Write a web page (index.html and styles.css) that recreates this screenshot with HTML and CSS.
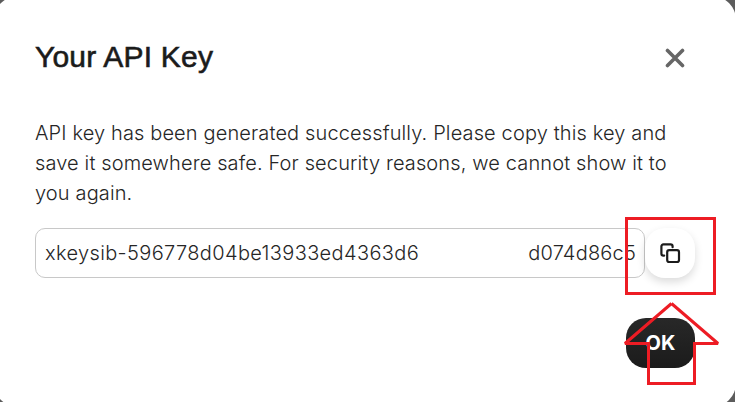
FILE: index.html
```html
<!DOCTYPE html>
<html lang="en">
	<head>
		<meta charset="UTF-8" />
		<meta name="viewport" content="width=device-width, initial-scale=1.0" />
		<title>Your API Key</title>
		<link rel="stylesheet" href="styles.css">
	</head>
	<body>
		<div class="modal">
			<div class="modal-header">
				<h1>Your API Key</h1>
				<button class="close-btn" aria-label="Close">
					<svg width="20" height="20" viewBox="0 0 20 20">
						<path d="M2.5 2.5 L17.5 17.5 M17.5 2.5 L2.5 17.5" />
					</svg>
				</button>
			</div>
			<p class="message">API key has been generated successfully. Please copy this key and<br />save it somewhere safe. For security reasons, we cannot show it to<br />you again.</p>
			<div class="key-row">
				<div class="key-field">
					<span class="key-start">xkeysib-596778d04be13933ed4363d6</span>
					<span class="key-end">d074d86c5</span>
				</div>
				<button class="copy-btn" aria-label="Copy">
					<svg width="22" height="22" viewBox="0 0 22 22">
						<rect x="8.2" y="8.2" width="11.8" height="11.8" rx="2" />
						<path d="M5.2 13.6 H4.4 A2 2 0 0 1 2.4 11.6 V4.4 A2 2 0 0 1 4.4 2.4 H11.6 A2 2 0 0 1 13.6 4.4 V5.2" />
					</svg>
				</button>
			</div>
			<div class="modal-footer">
				<button class="ok-btn">OK</button>
			</div>
		</div>
		<!-- red marker around the copy button and arrow pointing at it -->
		<svg class="marker" width="735" height="402" viewBox="0 0 735 402">
			<rect x="626.5" y="218.5" width="88" height="75" />
			<path stroke-linejoin="bevel" d="M671.5 303.5 L718 343.5 H694.5 M648.5 343.5 H625 L671.5 303.5" />
			<path d="M694.5 342 V383.5 H648.5 V342" />
		</svg>
	</body>
</html>
```

FILE: styles.css
```css
* {
	margin: 0;
	padding: 0;
	box-sizing: border-box;
}
body {
	height: 402px;
	overflow: hidden;
	background-color: rgb(92, 92, 92);
	font-family: Inter, "Liberation Sans", sans-serif;
	color: rgb(38, 38, 38);
}
button {
	border: none;
	background: none;
	cursor: pointer;
}
/* the dialog runs slightly past the window on every side */
.modal {
	width: 742px;
	height: 411px;
	margin: -4px 0 0 -6px;
	padding: 36px 41px 0 41px;
	border-radius: 24px;
	background-color: rgb(255, 255, 255);
}
.modal-header {
	height: 50px;
	display: flex;
	justify-content: space-between;
	align-items: center;
}
.modal-header > h1 {
	font-family: "Liberation Sans", sans-serif;
	font-size: 30px;
	font-weight: 400;
	line-height: 50px;
	letter-spacing: 0.2px;
	color: rgb(27, 27, 27);
	-webkit-text-stroke: 0.6px rgb(27, 27, 27);
}
.close-btn {
	width: 40px;
	height: 40px;
	padding-top: 2px;
	display: flex;
	justify-content: center;
	align-items: center;
}
.close-btn path {
	fill: none;
	stroke: rgb(102, 102, 102);
	stroke-width: 3.6;
	stroke-linecap: round;
}
.message {
	margin-top: 36px;
	font-size: 20px;
	font-weight: 300;
	line-height: 30px;
	letter-spacing: 0.13px;
	white-space: nowrap;
}
.key-row {
	margin-top: 20px;
	display: flex;
}
.key-field {
	width: 610px;
	height: 50px;
	padding: 0 8px 0 9px;
	border: 1px solid rgb(200, 200, 200);
	border-radius: 10px;
	display: flex;
	justify-content: space-between;
	font-size: 20px;
	font-weight: 300;
	line-height: 48px;
	letter-spacing: 0.2px;
}
.key-start {
	letter-spacing: 0.36px;
}
.copy-btn {
	width: 50px;
	height: 50px;
	border-radius: 20px;
	background-color: rgb(255, 255, 255);
	box-shadow: 0 4px 8px rgba(0, 0, 0, 0.14);
	display: flex;
	justify-content: center;
	align-items: center;
}
.copy-btn svg {
	fill: none;
	stroke: rgb(27, 27, 27);
	stroke-width: 2.2;
	stroke-linecap: round;
}
.modal-footer {
	margin-top: 40px;
	display: flex;
	justify-content: flex-end;
}
.ok-btn {
	width: 69px;
	height: 50px;
	border-radius: 20px;
	background: linear-gradient(rgb(40, 40, 40), rgb(27, 27, 27));
	color: rgb(255, 255, 255);
	font-family: Inter, sans-serif;
	font-size: 20px;
	font-weight: 700;
}
.marker {
	position: absolute;
	top: 0;
	left: 0;
	pointer-events: none;
	fill: none;
	stroke: rgb(237, 28, 36);
	stroke-width: 3;
}
```
